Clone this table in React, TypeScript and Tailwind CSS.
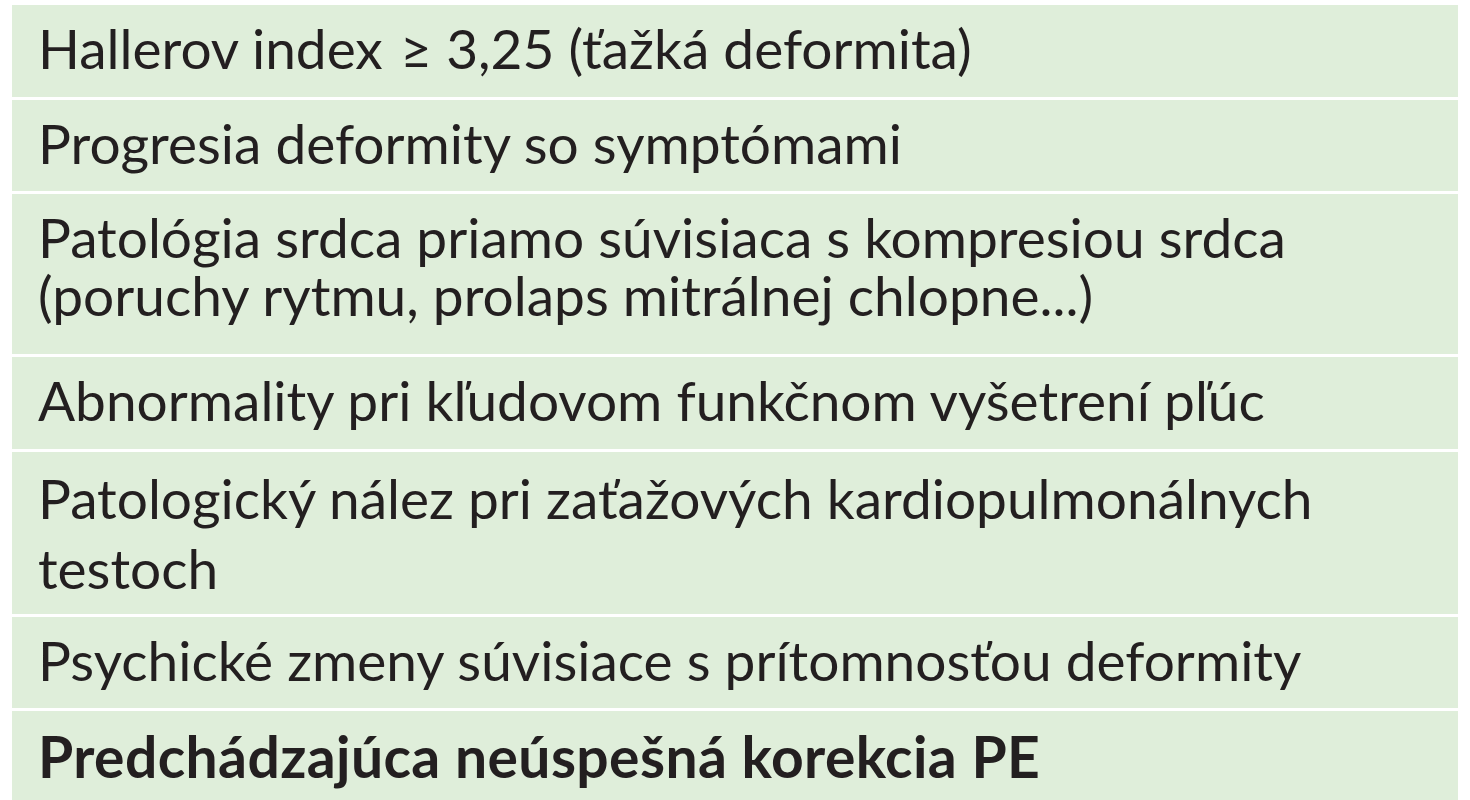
import React from 'react';

type Row = { lines: string[]; h: number; pt: number; lh: number; bold?: boolean };

const rows: Row[] = [
  { lines: ['Hallerov index\u200A ≥ 3,25 (ťažká deformita)'], h: 92, pt: 14, lh: 58 },
  { lines: ['Progresia deformity so symptómami'], h: 91, pt: 14, lh: 58 },
  {
    lines: ['Patológia srdca priamo súvisiaca s kompresiou srdca', '(poruchy rytmu, prolaps mitrálnej chlopne...)'],
    h: 160,
    pt: 14,
    lh: 58,
  },
  { lines: ['Abnormality pri kľudovom funkčnom vyšetrení pľúc'], h: 92, pt: 14, lh: 58 },
  {
    lines: ['Patologický nález pri zaťažových kardiopulmonálnych', 'testoch'],
    h: 162,
    pt: 11,
    lh: 70,
  },
  { lines: ['Psychické zmeny súvisiace s prítomnosťou deformity'], h: 91, pt: 14, lh: 58 },
  { lines: ['Predchádzajúca neúspešná korekcia PE'], h: 92, pt: 16, lh: 58, bold: true },
];

const App: React.FC = () => {
  return (
    <div className="w-[1470px] h-[800px] overflow-hidden bg-white pt-[5px] pl-[12px] pr-[12px]">
      <div className="flex flex-col gap-[3px] font-['Lato',sans-serif] text-[#231f20]">
        {rows.map((r, i) => (
          <div
            key={i}
            className={`bg-[#dfeeda] pl-[26px] shrink-0 whitespace-pre ${
              r.bold ? 'font-bold text-[57px] tracking-[0.4px]' : 'font-normal text-[55px]'
            }`}
            style={{ height: r.h, paddingTop: r.pt, lineHeight: `${r.lh}px` }}
          >
            {r.lines.map((l, j) => (
              <div key={j}>{l}</div>
            ))}
          </div>
        ))}
      </div>
    </div>
  );
};

export default App;
